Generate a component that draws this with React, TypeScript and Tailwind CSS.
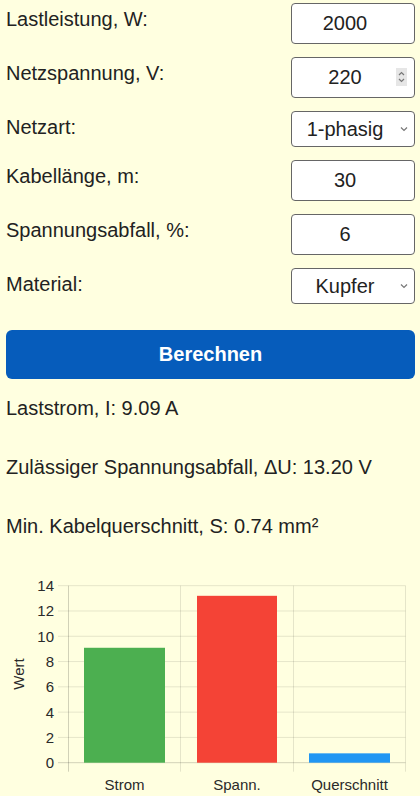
import React from "react";

const rows: { label: string; value: string; kind: "num" | "sel"; spin?: boolean }[] = [
  { label: "Lastleistung, W:", value: "2000", kind: "num" },
  { label: "Netzspannung, V:", value: "220", kind: "num", spin: true },
  { label: "Netzart:", value: "1-phasig", kind: "sel" },
  { label: "Kabellänge, m:", value: "30", kind: "num" },
  { label: "Spannungsabfall, %:", value: "6", kind: "num" },
  { label: "Material:", value: "Kupfer", kind: "sel" },
];

function Chart() {
  const zero = 201.7;
  const k = 12.643;
  const ticks = [0, 2, 4, 6, 8, 10, 12, 14];
  const bars = [
    { x1: 84, x2: 165, v: 9.09, c: "#4caf50", label: "Strom" },
    { x1: 197, x2: 277, v: 13.2, c: "#f44336", label: "Spann." },
    { x1: 309, x2: 390, v: 0.74, c: "#2196f3", label: "Querschnitt" },
  ];
  const vx = [68.5, 180.5, 293.5, 405.5];
  const ff = "'Liberation Sans', Arial, sans-serif";
  return (
    <svg width="420" height="236" viewBox="0 0 420 236" className="block">
      {ticks.map((t) => {
        const y = zero - t * k;
        return (
          <g key={t}>
            <line x1={58} x2={405.5} y1={y} y2={y} stroke={t === 0 ? "rgba(0,0,0,0.18)" : "rgba(0,0,0,0.1)"} strokeWidth={1} />
            <text x={54} y={y} textAnchor="end" dominantBaseline="central" fontSize={15} fill="#2a2a2a" fontFamily={ff}>
              {t}
            </text>
          </g>
        );
      })}
      {vx.map((x, i) => (
        <line key={x} x1={x} x2={x} y1={zero - 14 * k} y2={210.7} stroke={i === 0 ? "rgba(0,0,0,0.18)" : "rgba(0,0,0,0.1)"} strokeWidth={1} />
      ))}
      {bars.map((b) => (
        <g key={b.label}>
          <rect x={b.x1} y={zero - b.v * k} width={b.x2 - b.x1} height={b.v * k} fill={b.c} />
          <text x={(b.x1 + b.x2) / 2} y={223} textAnchor="middle" dominantBaseline="central" fontSize={15} fill="#2a2a2a" fontFamily={ff}>
            {b.label}
          </text>
        </g>
      ))}
      <text x={18.5} y={113} transform="rotate(-90 18.5 113)" textAnchor="middle" dominantBaseline="central" fontSize={15} fill="#2a2a2a" fontFamily={ff}>
        Wert
      </text>
    </svg>
  );
}

export default function App() {
  return (
    <div className="min-h-[796px] w-[420px] bg-[#ffffe0] font-['Liberation_Sans',Arial,sans-serif] text-[20px] leading-[23px] text-[#222]">
      <div className="pl-[6px] pr-[5px] pt-[3px]">
        <div className="flex flex-col gap-[13px]">
          {rows.map((r) => (
            <div key={r.label} className="flex items-start justify-between">
              <label className="pt-[5px]">{r.label}</label>
              <div className="relative">
                {r.kind === "num" ? (
                  <input
                    readOnly
                    value={r.value}
                    className="box-border block h-[41px] w-[124px] appearance-none rounded-[4px] border border-[#666] bg-white pl-[4px] pr-[20px] text-center text-[20px] text-[#222] outline-none"
                  />
                ) : (
                  <div className="box-border flex h-[36px] w-[124px] items-center justify-center rounded-[4px] border border-[#666] bg-white pl-[4px] pr-[20px] text-[20px] text-[#222]">
                    {r.value}
                  </div>
                )}
                {r.spin && (
                  <div className="absolute right-[8px] top-[11px] flex h-[18px] w-[11px] flex-col items-center justify-center bg-[#e6e6e6]">
                    <svg width="9" height="16" viewBox="0 0 9 16" fill="none" stroke="#777" strokeWidth="1.2">
                      <path d="M2 6 L4.5 3.5 L7 6" />
                      <path d="M2 10 L4.5 12.5 L7 10" />
                    </svg>
                  </div>
                )}
                {r.kind === "sel" && (
                  <svg className="absolute right-[7px] top-[15px]" width="8" height="6" viewBox="0 0 8 6" fill="none" stroke="#777" strokeWidth="1.2">
                    <path d="M1 1.5 L4 4.5 L7 1.5" />
                  </svg>
                )}
              </div>
            </div>
          ))}
        </div>
        <button className="mt-[26px] block h-[49px] w-full rounded-[6px] bg-[#065cbb] text-[20px] font-bold text-white">
          Berechnen
        </button>
        <div className="mt-[18px] flex flex-col gap-[36px]">
          <p>Laststrom, I: 9.09 A</p>
          <p>Zulässiger Spannungsabfall, ΔU: 13.20 V</p>
          <p>Min. Kabelquerschnitt, S: 0.74 mm²</p>
        </div>
      </div>
      <div className="mt-[23px]">
        <Chart />
      </div>
    </div>
  );
}
